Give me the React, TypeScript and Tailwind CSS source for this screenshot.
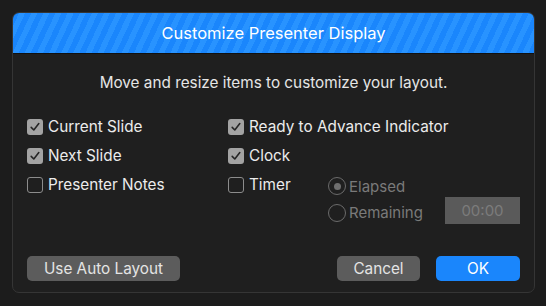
import React from "react";

const font = { fontFamily: "Inter, 'Noto Sans', 'Liberation Sans', sans-serif" };

function Check({ checked, label }: { checked: boolean; label: string }) {
  return (
    <div className="flex items-center h-[16px]">
      {checked ? (
        <div className="w-[16px] h-[16px] rounded-[3px] bg-[#a3a3a3] flex items-center justify-center">
          <svg width="12" height="12" viewBox="0 0 12 12">
            <path d="M2.2 6.4 L4.8 9 L9.8 2.6" fill="none" stroke="#262626" strokeWidth="1.6" strokeLinecap="round" strokeLinejoin="round" />
          </svg>
        </div>
      ) : (
        <div className="w-[16px] h-[16px] rounded-[3px] border border-[#8c8c8c]" />
      )}
      <span className="ml-[5px] text-[15.3px] leading-none text-[#ececec]">{label}</span>
    </div>
  );
}

function Radio({ selected, label }: { selected: boolean; label: string }) {
  return (
    <div className="flex items-center h-[18px]">
      <div className="w-[18px] h-[18px] rounded-full border border-[#6b6b6b] flex items-center justify-center">
        {selected && <div className="w-[7px] h-[7px] rounded-full bg-[#6e6e6e]" />}
      </div>
      <span className="ml-[3px] text-[15px] leading-none text-[#7a7a7a]">{label}</span>
    </div>
  );
}

export default function App() {
  return (
    <div className="w-[546px] h-[306px] bg-[#1c1c1c] pt-[12px] pl-[12px]" style={font}>
      <div className="w-[523px] h-[281px] rounded-[7px] border border-[#353535] bg-[#1f1f1f] overflow-hidden flex flex-col">
        <div className="h-[41px] shrink-0 flex items-center justify-center border-b border-[#111] bg-[repeating-linear-gradient(115deg,#1a86fc_0px,#1a86fc_5.5px,#2893ff_5.5px,#2893ff_11px)]">
          <span className="text-[16.5px] text-white leading-none">Customize Presenter Display</span>
        </div>
        <div className="flex-1 flex flex-col px-[14px]">
          <div className="mt-[20px] text-center text-[15.3px] leading-[18px] text-[#e6e6e6]">
            Move and resize items to customize your layout.
          </div>
          <div className="flex mt-[27px]">
            <div className="w-[201px] flex flex-col gap-[13px]">
              <Check checked label="Current Slide" />
              <Check checked label="Next Slide" />
              <Check checked={false} label="Presenter Notes" />
            </div>
            <div className="flex-1 flex flex-col gap-[13px]">
              <Check checked label="Ready to Advance Indicator" />
              <Check checked label="Clock" />
              <div className="flex">
                <div className="w-[100px]">
                  <Check checked={false} label="Timer" />
                </div>
                <div className="flex-1 flex flex-col gap-[2px]">
                  <Radio selected label="Elapsed" />
                  <div className="flex items-center justify-between">
                    <Radio selected={false} label="Remaining" />
                    <div className="mb-[4px] w-[75px] h-[27px] bg-[#5a5a5a] flex items-center justify-center text-[15px] text-[#7c7c7c] leading-none">
                      00:00
                    </div>
                  </div>
                </div>
              </div>
            </div>
          </div>
          <div className="flex-1" />
          <div className="flex items-center mb-[11px]">
            <button className="w-[153px] h-[25px] rounded-[5px] bg-[#5c5c5c] text-[15.3px] text-[#e4e4e4] leading-none">
              Use Auto Layout
            </button>
            <div className="flex-1" />
            <button className="w-[83px] h-[25px] rounded-[5px] bg-[#5c5c5c] text-[15.3px] text-[#e4e4e4] leading-none">
              Cancel
            </button>
            <button className="ml-[16px] w-[84px] h-[25px] rounded-[5px] bg-[#1a86fc] text-[15.3px] text-white leading-none">
              OK
            </button>
          </div>
        </div>
      </div>
    </div>
  );
}
